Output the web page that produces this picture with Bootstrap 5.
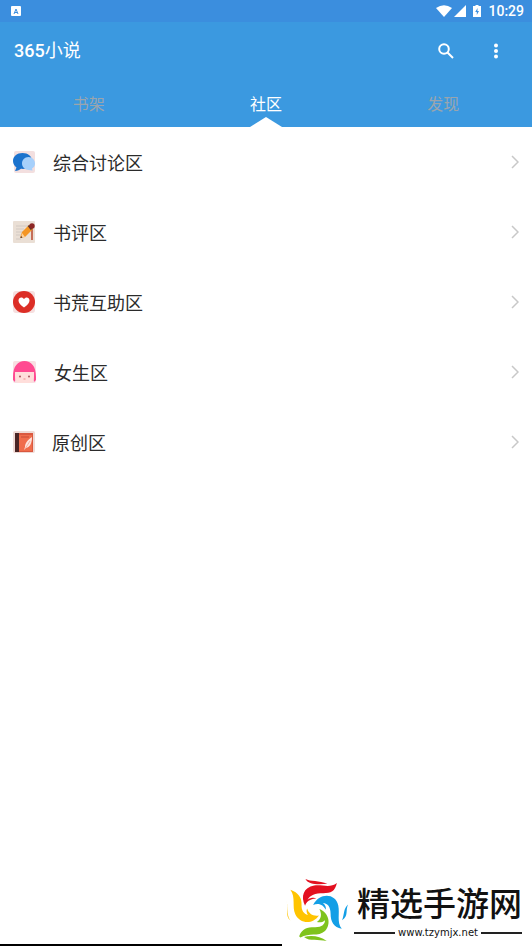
<!DOCTYPE html>
<html lang="zh-CN">
<head>
<meta charset="utf-8">
<meta name="viewport" content="width=device-width, initial-scale=1">
<title>365小说</title>
<link href="https://cdn.jsdelivr.net/npm/bootstrap@5.3.0/dist/css/bootstrap.min.css" rel="stylesheet">
<style>
body{font-family:Roboto,"Noto Sans CJK SC",sans-serif;background:#fff;color:#2b2b2b}
svg{display:block;flex:none}
.status-strip{height:22px;background:#3b8ede;font-size:14px;line-height:22px;padding:0 8px 0 11px}
.clock{margin-left:7px;font-weight:500}
.signal{margin-left:2px}
.cell-battery{margin-left:7px}
.app-head{background:#3b99e0}
.title-row{height:58px;padding:0 16px 0 14px}
.app-title{font-size:18px;line-height:24px;font-weight:500}
.tool-btn{width:40px;height:40px}
.tool-gap{gap:10px}
.tab-row{height:47px}
.tab-link{position:relative;font-size:16px;line-height:24px;padding:13px 0 10px;color:#9aa5ae;text-decoration:none}
.tab-link.active{color:#fff}
.tab-link.active::after{content:"";position:absolute;bottom:0;left:50%;margin-left:-16px;border:solid transparent;border-width:0 16px 10px;border-bottom-color:#fff}
.zone{height:70px;padding:0 13px;font-size:18px;line-height:26px;color:#2b2b2b;text-decoration:none}
.zone-name{margin-left:17px}
.base-line{height:2px;background:#000}
.brand{width:250px;height:72px;padding-right:11px}
.brand-text{padding-top:4px}
.brand-name{font-family:"Noto Sans CJK SC",sans-serif;font-size:33px;line-height:48px;font-weight:500;color:#111;white-space:nowrap;padding-left:3px}
.brand-url{font-family:"DejaVu Sans",sans-serif;font-size:10px;line-height:14px;color:#111;margin:0 3px}
.rule{height:2px;background:#222}
</style>
<script src="https://cdn.jsdelivr.net/npm/bootstrap@5.3.0/dist/js/bootstrap.bundle.min.js" defer></script>
</head>
<body class="d-flex flex-column min-vh-100">
<header class="text-white">
  <div class="status-strip d-flex align-items-center">
    <svg width="10" height="10" viewBox="0 0 10 10" aria-hidden="true"><rect width="10" height="10" rx="1" fill="#fff"/><path d="M3 8 5 3 7 8M3.7 6.5h2.6" fill="none" stroke="#3b8ede"/></svg>
    <svg class="ms-auto" width="16" height="12" viewBox="0 0 16 12" aria-hidden="true"><path d="M0 3Q8-2.500 16 3L8 12Z" fill="#fff"/></svg>
    <svg class="signal" width="12" height="12" viewBox="0 0 12 12" aria-hidden="true"><path d="M12 0V12H0Z" fill="#fff"/></svg>
    <svg class="cell-battery" width="8" height="12" viewBox="0 0 8 12" aria-hidden="true"><path d="M2.5 0h3v1H8v11H0V1h2.5Z" fill="#fff"/><path d="M4.6 3 2.2 7h1.6v3L6 6H4.4Z" fill="#3b8ede"/></svg>
    <span class="clock">10:29</span>
  </div>
  <div class="app-head">
    <div class="title-row d-flex align-items-center">
      <h1 class="app-title m-0 me-auto">365<span class="fw-normal">小说</span></h1>
      <div class="d-flex tool-gap">
        <button class="btn tool-btn p-0 border-0 d-flex align-items-center justify-content-center" type="button" aria-label="搜索"><svg width="16" height="16" viewBox="0 0 16 16" fill="none" stroke="#fff" stroke-width="2"><circle cx="6" cy="6" r="4.8"/><path d="m9.5 9.5 5.500 5.500"/></svg></button>
        <button class="btn tool-btn p-0 border-0 d-flex align-items-center justify-content-center" type="button" aria-label="更多"><svg width="24" height="16" viewBox="0 0 24 16" fill="#fff"><circle cx="12" cy="2.5" r="2"/><circle cx="12" cy="8" r="2"/><circle cx="12" cy="13.5" r="2"/></svg></button>
      </div>
    </div>
    <nav class="tab-row row g-0 text-center" aria-label="主导航">
      <a class="tab-link col" href="#">书架</a>
      <a class="tab-link col active" href="#" aria-current="page">社区</a>
      <a class="tab-link col" href="#">发现</a>
    </nav>
  </div>
</header>
<main class="flex-grow-1">
  <a class="zone d-flex align-items-center" href="#">
    <svg width="23" height="22" viewBox="0 0 23 22" aria-hidden="true"><rect x="1" width="21" height="22" rx="2" fill="#f3dfdf"/><path d="M9.5 2C4 2 0 5.500 0 10c0 3 1.500 5 3.500 6.500L2 20c3 0 4.500-1 6-2.200C15 18.500 19 15 19 10S15 2 9.500 2Z" fill="#1b73cd"/><path d="M15.500 6C11.500 6 9 9 9 12.500S12 19 15.500 19l4 .500-.5-2c2-1 3-3 3-5C22 9 19.500 6 15.500 6Z" fill="#a6d0fb"/></svg>
    <span class="zone-name me-auto pt-1">综合讨论区</span>
    <svg width="8" height="14" viewBox="0 0 8 14" fill="none" stroke="#c8c8c8" stroke-width="1.500"><path d="m1 1 6 6-6 6"/></svg>
  </a>
  <a class="zone d-flex align-items-center" href="#">
    <svg width="23" height="22" viewBox="0 0 23 22" aria-hidden="true"><rect width="22" height="22" rx="1" fill="#eadfd5"/><path d="M3 5h12M3 8h8M3 11h7M3 14h5M3 18h5" stroke="#d2c9c2"/><path d="M19 6v13" stroke="#b9472d" stroke-width="1.500"/><path d="M16 4 20 8 12 16 7 17 9 11Z" fill="#f49624"/><path d="m9 12-1 5 4-1Z" fill="#ffd199"/><path d="m8 15-.5 2 2-.5Z" fill="#352320"/><path d="m15.500 4.500 3 4" stroke="#53362e" stroke-width="2"/><circle cx="19" cy="5" r="2.700" fill="#8c2524"/></svg>
    <span class="zone-name me-auto pt-1">书评区</span>
    <svg width="8" height="14" viewBox="0 0 8 14" fill="none" stroke="#c8c8c8" stroke-width="1.500"><path d="m1 1 6 6-6 6"/></svg>
  </a>
  <a class="zone d-flex align-items-center" href="#">
    <svg width="23" height="22" viewBox="0 0 23 22" aria-hidden="true"><rect width="22" height="22" rx="3" fill="#f6dfdf"/><circle cx="11" cy="11" r="11" fill="#dc2e26"/><path d="M11 16.500C7.500 14 5.500 12 5.500 9.500c0-3.500 4-4 5.500-1.500 1.500-2.500 5.500-2 5.500 1.500 0 2.500-2 4.500-5.500 7Z" fill="#fff"/></svg>
    <span class="zone-name me-auto pt-1">书荒互助区</span>
    <svg width="8" height="14" viewBox="0 0 8 14" fill="none" stroke="#c8c8c8" stroke-width="1.500"><path d="m1 1 6 6-6 6"/></svg>
  </a>
  <a class="zone d-flex align-items-center" href="#">
    <svg width="24" height="22" viewBox="0 0 24 22" aria-hidden="true"><rect width="23" height="22" rx="2" fill="#f8dfe2"/><path d="M0 16C0 5 5 0 11.500 0S23 5 23 16v3l-2 2-1-10H3L2 21l-2-2Z" fill="#ff4a91"/><path d="M2 11h19v4c0 4-1.500 7-5 7H7c-3.500 0-5-3-5-7Z" fill="#ffdedb"/><circle cx="7" cy="15.500" r="1" fill="#a9545d"/><circle cx="16" cy="15.500" r="1" fill="#a9545d"/><path d="M10.500 18h2" stroke="#eb8d92"/></svg>
    <span class="zone-name me-auto pt-1">女生区</span>
    <svg width="8" height="14" viewBox="0 0 8 14" fill="none" stroke="#c8c8c8" stroke-width="1.500"><path d="m1 1 6 6-6 6"/></svg>
  </a>
  <a class="zone d-flex align-items-center" href="#">
    <svg width="22" height="22" viewBox="0 0 22 22" aria-hidden="true"><rect width="22" height="22" rx="2" fill="#efd9d4"/><path d="M2 2h18v19H2Z" fill="#d9583f"/><path d="M6 4h13v16H6Z" fill="#f06c4b"/><path d="M2 2h4v19H2Z" fill="#4a2525"/><path d="M8 6h8" stroke="#c84b37"/><path d="M19 6c-5 3-7 7-7 10l-1 3 2-2c4-1 6-5 6-11Z" fill="#ffe3dc"/><path d="m12 18 5-8" stroke="#e99b88" stroke-width=".7"/></svg>
    <span class="zone-name me-auto pt-1">原创区</span>
    <svg width="8" height="14" viewBox="0 0 8 14" fill="none" stroke="#c8c8c8" stroke-width="1.500"><path d="m1 1 6 6-6 6"/></svg>
  </a>
</main>
<footer class="d-flex align-items-end">
  <div class="base-line flex-grow-1"></div>
  <div class="brand d-flex align-items-start">
    <svg width="72" height="72" viewBox="9 5 206 206" aria-hidden="true">
      <g fill="#e31020"><path d="M76 19C90 27 115 22 139 33 115 35 86 37 76 19Z"/><path d="M75 96C62 70 70 43 101 38c25-3 45 8 65-7-5 24-17 29-39 29C104 60 89 65 82 79c9-7 20-7 25-4C88 77 79 84 75 96Z"/></g>
      <g fill="#139fe6"><path d="M198 92c-8 17 2 33-17 45 7-17 3-33 17-45Z"/><path d="M98 94c18-37 65-34 72 1 5 25-5 46 10 67-23-5-32-20-32-44 0-20-10-30-22-30 7 5 10 13 8 19-6-13-20-21-36-13Z"/></g>
      <g fill="#7fc31c"><path d="M72 185c21-5 46-3 65 12-26-7-47 2-65-12Z"/><path d="M116 105c27 10 35 43 16 63-19 18-46 3-70 19-4-2-4-5-3-6 7-20 23-24 42-24 22 1 31-9 31-20-7 6-16 8-23 5 12-8 15-21 7-37Z"/></g>
      <g fill="#ffc400"><path d="M21 80c9 18-2 38 12 58-18-15-2-36-12-58Z"/><path d="M33 50c23 8 33 23 32 43-1 17 7 26 18 29-4-6-5-13-2-18 5 16 18 23 34 20-22 30-57 20-68-4C37 99 49 72 33 50Z"/></g>
    </svg>
    <div class="brand-text flex-grow-1">
      <div class="brand-name text-center">精选手游网</div>
      <div class="d-flex align-items-center"><span class="rule flex-grow-1"></span><span class="brand-url">www.tzymjx.net</span><span class="rule flex-grow-1"></span></div>
    </div>
  </div>
</footer>
</body>
</html>
